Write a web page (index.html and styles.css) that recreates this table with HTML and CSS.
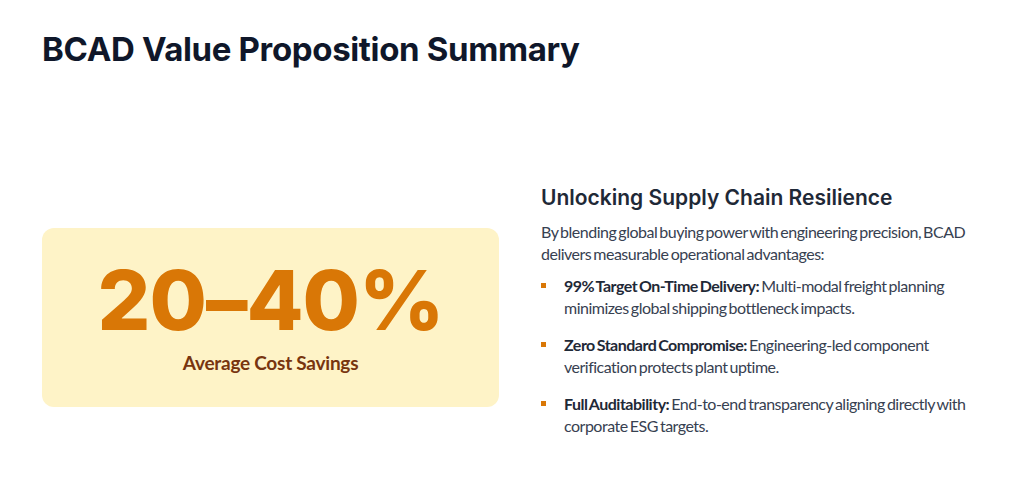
FILE: index.html
```html
<!DOCTYPE html>
<html lang="en">
<head>
<meta charset="utf-8">
<title>BCAD Value Proposition Summary</title>
<link rel="stylesheet" href="styles.css">
</head>
<body>
<main class="slide">
  <h1 class="title">BCAD Value Proposition Summary</h1>
  <section class="content">
    <div class="stat-card">
      <div class="stat-value">20–40%</div>
      <div class="stat-label">Average Cost Savings</div>
    </div>
    <div class="details">
      <h2 class="subtitle">Unlocking Supply Chain Resilience</h2>
      <p class="intro">By blending global buying power with engineering precision, BCAD delivers measurable operational advantages:</p>
      <ul class="benefits">
        <li><strong>99% Target On-Time Delivery:</strong> Multi-modal freight planning minimizes global shipping bottleneck impacts.</li>
        <li><strong>Zero Standard Compromise:</strong> Engineering-led component verification protects plant uptime.</li>
        <li><strong>Full Auditability:</strong> End-to-end transparency aligning directly with corporate ESG targets.</li>
      </ul>
    </div>
  </section>
</main>
</body>
</html>
```

FILE: styles.css
```css
* { box-sizing: border-box; }
html, body { margin: 0; padding: 0; background: #ffffff; }
body { font-family: "Lato", "Liberation Sans", sans-serif; color: #374151; }

.slide {
  width: 1024px;
  height: 495px;
  padding: 30px 42px 0;
  display: flex;
  flex-direction: column;
}

.title {
  margin: 0;
  font-family: "Inter", "Liberation Sans", sans-serif;
  font-weight: 700;
  font-size: 33px;
  line-height: 1.2;
  letter-spacing: -0.35px;
  color: #0f172a;
}

.content {
  flex: 1;
  padding-top: 70px;
  display: grid;
  grid-template-columns: 457px 1fr;
  column-gap: 42px;
  align-items: center;
}

.stat-card {
  background: #fef3c7;
  border-radius: 12px;
  height: 179px;
  display: flex;
  flex-direction: column;
  align-items: center;
  justify-content: center;
}

.stat-value {
  font-family: "Inter", "Liberation Sans", sans-serif;
  font-weight: 800;
  font-size: 83px;
  line-height: 1;
  color: #d97706;
  letter-spacing: -1px;
  margin-top: -1px;
}

.stat-label {
  margin-top: 9px;
  font-weight: 700;
  font-size: 19px;
  letter-spacing: -0.25px;
  color: #78350f;
}

.details { padding-bottom: 13px; }

.subtitle {
  margin: 0 0 10px;
  font-family: "Inter", "Liberation Sans", sans-serif;
  font-weight: 600;
  font-size: 21px;
  line-height: 1.3;
  color: #1f2937;
}

.intro {
  margin: 0 0 10px;
  font-size: 16px;
  line-height: 22px;
  letter-spacing: -0.5px;
  word-spacing: -1.5px;
}

.benefits {
  margin: 0;
  padding: 0;
  list-style: none;
  display: flex;
  flex-direction: column;
  gap: 15px;
}

.benefits li {
  position: relative;
  padding-left: 23px;
  font-size: 16px;
  line-height: 22px;
  letter-spacing: -0.5px;
  word-spacing: -1.5px;
}

.benefits li::before {
  content: "";
  position: absolute;
  left: 0;
  top: 8px;
  width: 5px;
  height: 5px;
  background: #d97706;
}

.benefits strong { font-weight: 700; color: #1f2937; }
```
